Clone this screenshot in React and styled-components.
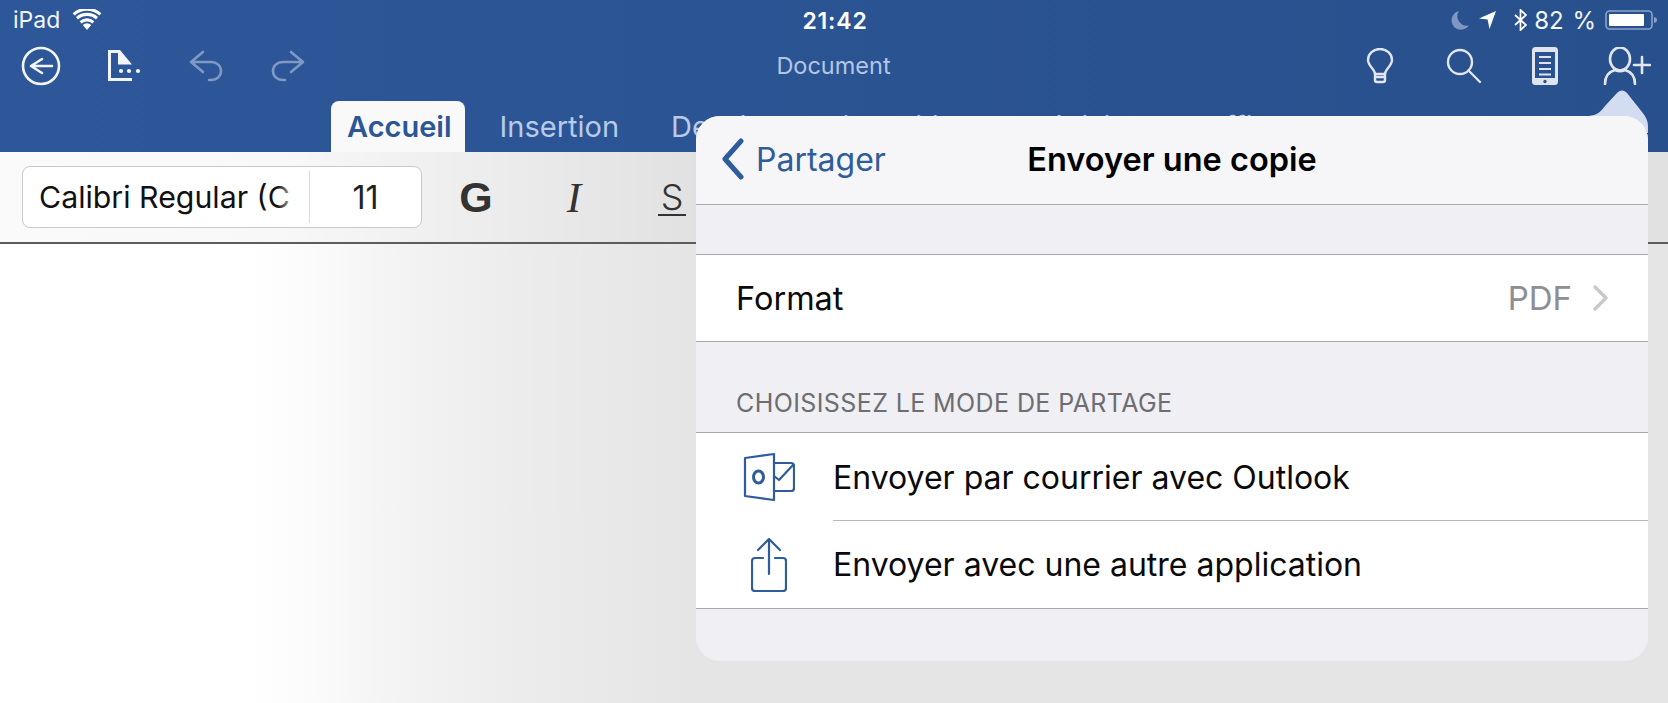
import React from "react";
import styled, { createGlobalStyle } from "styled-components";

const Global = createGlobalStyle`
  html, body { margin: 0; padding: 0; background: #e5e5e5; }
  body { font-family: Inter, "Noto Sans", sans-serif; overflow: hidden; }
  * { box-sizing: border-box; }
`;

const Page = styled.div`
  position: relative;
  width: 1668px;
  height: 703px;
  overflow: hidden;
  display: flex;
  flex-direction: column;
  background: linear-gradient(90deg, #ffffff 0, #ffffff 250px, #fbfbfb 310px, #f4f4f4 390px, #ececec 520px, #e5e5e5 690px);
`;

const Header = styled.header`
  height: 152px;
  flex: none;
  background: linear-gradient(90deg, #2d5799 0%, #28508c 100%);
  color: #fff;
  display: flex;
  flex-direction: column;
`;

const StatusBar = styled.div`
  height: 40px;
  padding: 0 11px 0 13px;
  display: grid;
  grid-template-columns: 1fr auto 1fr;
  align-items: center;
  font-size: 23px;
  color: #f2f5fa;
`;

const StatusGroup = styled.div`
  display: flex;
  align-items: center;
  gap: ${(p) => p.$gap || 0}px;
  justify-content: ${(p) => (p.$end ? "flex-end" : "flex-start")};
`;

const Clock = styled.div`
  font-weight: 600;
  font-size: 23px;
  letter-spacing: 0.8px;
  padding-top: 2px;
  color: #fff;
`;

const Battery = styled.span`
  margin-left: 7px;
  font-size: 24px;
  word-spacing: 2px;
`;

const Toolbar = styled.div`
  height: 51px;
  padding: 0 17px 0 21px;
  display: grid;
  grid-template-columns: 1fr auto 1fr;
  align-items: center;
`;

const ToolGroup = styled.div`
  display: flex;
  align-items: center;
  justify-content: ${(p) => (p.$end ? "flex-end" : "flex-start")};
`;

const DocTitle = styled.div`
  font-size: 23.5px;
  color: #b4c6e4;
  margin-right: 5px;
`;

const IconSlot = styled.span`
  display: flex;
  align-items: center;
  justify-content: center;
  flex: none;
  width: ${(p) => p.$w}px;
  margin-left: ${(p) => p.$ml || 0}px;
`;

const TabRow = styled.nav`
  flex: 1;
  display: flex;
  align-items: flex-end;
  padding: 0 0 0 331px;
  white-space: nowrap;
  overflow: hidden;
`;

const Tab = styled.div`
  height: 51px;
  display: flex;
  align-items: center;
  justify-content: center;
  font-size: 29px;
  padding: ${(p) => (p.$active ? "0 13px 0 16px" : "0")};
  margin-left: ${(p) => p.$ml || 0}px;
  border-radius: 8px 8px 0 0;
  font-weight: ${(p) => (p.$active ? 600 : 400)};
  color: ${(p) => (p.$active ? "#2b5797" : "#b7cbe9")};
  background: ${(p) => (p.$active ? "#f9f9f9" : "transparent")};
`;

const Ribbon = styled.div`
  height: 92px;
  flex: none;
  display: flex;
  align-items: center;
  padding: 0 0 0 22px;
  border-bottom: 2px solid #5c5c5c;
  background: linear-gradient(90deg, #fafafa 0, #f8f8f8 280px, #e1e1e1 700px);
`;

const FontBox = styled.div`
  width: 400px;
  height: 62px;
  display: flex;
  align-items: center;
  background: #fff;
  border: 1px solid #c9c9c9;
  border-radius: 8px;
`;

const FontName = styled.div`
  position: relative;
  width: 264px;
  margin-left: 16px;
  white-space: nowrap;
  font-size: 30.3px;
  color: #111;
  &::after {
    content: "";
    position: absolute;
    top: 0;
    right: 8px;
    bottom: 0;
    width: 18px;
    background: linear-gradient(90deg, rgba(255, 255, 255, 0), rgba(255, 255, 255, 0.8));
  }
`;

const FontDivider = styled.div`
  width: 1px;
  height: 52px;
  margin-left: 6px;
  background: #dcdcdc;
`;

const FontSize = styled.div`
  flex: 1;
  text-align: center;
  font-size: 32px;
  color: #222;
`;

const FormatBtn = styled.div`
  width: 60px;
  margin-left: ${(p) => p.$ml}px;
  text-align: center;
  color: #333;
  line-height: 1;
  font-size: ${(p) => p.$size}px;
  font-weight: ${(p) => p.$weight || 400};
  font-style: ${(p) => (p.$italic ? "italic" : "normal")};
  font-family: ${(p) => p.$font || "Inter"}, sans-serif;
`;

const Underlined = styled.span`
  display: inline-block;
  padding: 0 3px 3px;
  line-height: 27px;
  border-bottom: 2px solid #333;
`;

const Body = styled.main`
  flex: 1;
`;

const Arrow = styled.svg`
  position: absolute;
  left: 1585px;
  top: 88px;
`;

const Sheet = styled.section`
  position: absolute;
  left: 696px;
  top: 116px;
  width: 952px;
  height: 545px;
  border-radius: 24px;
  overflow: hidden;
  background: #efeff4;
  display: flex;
  flex-direction: column;
`;

const SheetNav = styled.div`
  height: 89px;
  flex: none;
  background: #f6f6f9;
  border-bottom: 1px solid #a9a9ad;
  display: grid;
  grid-template-columns: 1fr auto 1fr;
  align-items: center;
  padding-bottom: 2px;
`;

const BackLink = styled.div`
  display: flex;
  align-items: center;
  gap: 11px;
  margin-left: 25px;
  font-size: 32px;
  color: #2f5c9b;
`;

const SheetTitle = styled.h2`
  margin: 0;
  font-size: 32.5px;
  font-weight: 600;
  color: #000;
`;

const Spacer = styled.div`
  height: ${(p) => p.$h}px;
  flex: none;
`;

const Group = styled.div`
  flex: none;
  background: #fff;
  border-top: 1px solid #a9a9ad;
  border-bottom: 1px solid #a9a9ad;
`;

const FormatRow = styled.div`
  height: 86px;
  display: flex;
  align-items: center;
  justify-content: space-between;
  padding: 0 39px 0 40px;
  font-size: 32.5px;
  color: #0a0a0a;
`;

const FormatValue = styled.div`
  display: flex;
  align-items: center;
  gap: 21px;
  font-size: 33px;
  color: #8e8e93;
`;

const SectionLabel = styled.div`
  height: 90px;
  flex: none;
  padding: 0 0 14px 40px;
  display: flex;
  align-items: flex-end;
  font-size: 25px;
  color: #6d6d72;
  letter-spacing: 0.4px;
`;

const ShareRow = styled.div`
  height: ${(p) => p.$h}px;
  display: flex;
  align-items: center;
  font-size: 32px;
  color: #0a0a0a;
  position: relative;
  &::after {
    content: ${(p) => (p.$sep ? '""' : "none")};
    position: absolute;
    left: 137px;
    right: 0;
    bottom: 0;
    height: 1px;
    background: #b9b9bd;
  }
`;

const ShareIcon = styled.span`
  width: 137px;
  flex: none;
  display: flex;
  justify-content: center;
  padding-left: 8px;
`;

const Stroke = ({ w, h, vb, sw = 2.4, color = "currentColor", children }) => (
  <svg width={w} height={h} viewBox={vb || `0 0 ${w} ${h}`} fill="none" stroke={color} strokeWidth={sw} strokeLinecap="round" strokeLinejoin="round">
    {children}
  </svg>
);

export default function App() {
  return (
    <Page>
      <Global />
      <Header>
        <StatusBar>
          <StatusGroup $gap={12}>
            <span>iPad</span>
            <svg width="30" height="22" viewBox="0 0 30 22" fill="#fff">
              <path d="M15 21l-4.2-5a6.2 6.2 0 0 1 8.4 0z" />
              <path d="M7.6 12.2a11 11 0 0 1 14.8 0l-2 2.4a8 8 0 0 0-10.8 0z" />
              <path d="M4 8a16.500 16.500 0 0 1 22 0l-2 2.400a13.400 13.400 0 0 0-18 0z" />
              <path d="M.6 4.200a21.500 21.500 0 0 1 28.800 0l-2 2.400a18.500 18.500 0 0 0-24.800 0z" />
            </svg>
          </StatusGroup>
          <Clock>21:42</Clock>
          <StatusGroup $end>
            <svg width="18" height="20" viewBox="0 0 18 20" fill="#7f97c4">
              <path d="M8 1a9.500 9.500 0 0 0 10 14.500A9.500 9.500 0 1 1 8 1z" />
            </svg>
            <IconSlot $w={17} $ml={10}>
              <svg width="17" height="18" viewBox="0 0 17 18" fill="#fff"><path d="M17 0L10.500 18 8.600 8.600 0 7.400z" /></svg>
            </IconSlot>
            <IconSlot $w={13} $ml={18}>
              <svg width="13" height="22" viewBox="0 0 13 22" fill="none" stroke="#fff" strokeWidth="1.700"><path d="M1 6l11 10-5.500 5V1L12 6 1 16" /></svg>
            </IconSlot>
            <Battery>82 %</Battery>
            <IconSlot $w={52} $ml={9}>
              <svg width="52" height="20" viewBox="0 0 52 20">
                <rect x="1" y="1" width="46" height="18" rx="3.500" fill="none" stroke="#8ba3cd" strokeWidth="1.600" />
                <rect x="4" y="4" width="35" height="12" rx="1" fill="#fff" />
                <path d="M49 7c2 .4 3 1.500 3 3s-1 2.600-3 3z" fill="#8ba3cd" />
              </svg>
            </IconSlot>
          </StatusGroup>
        </StatusBar>
        <Toolbar>
          <ToolGroup>
            <IconSlot $w={40}>
              <Stroke w={40} h={40} color="#f2f5fa" sw={2.6}>
                <circle cx="20" cy="20" r="18" />
                <path d="M31 20H10M21 13l-11 7 11 7" />
              </Stroke>
            </IconSlot>
            <IconSlot $w={36} $ml={47}>
              <svg width="36" height="31" viewBox="0 0 36 31" fill="#f2f5fa">
                <path d="M0 0h12l12 14.500H10V3H3v25h21v3H0z" />
                <circle cx="13" cy="21" r="2.100" />
                <circle cx="21" cy="21" r="2.100" />
                <circle cx="30" cy="21" r="2.100" />
              </svg>
            </IconSlot>
            <IconSlot $w={34} $ml={45}>
              <Stroke w={34} h={32} color="#7f99c4" sw={2.6}>
                <path d="M14 2L2 12l12 10M2 12h20c6 0 10 4 10 9s-4 9-10 9h-2" />
              </Stroke>
            </IconSlot>
            <IconSlot $w={34} $ml={48}>
              <Stroke w={34} h={32} color="#7f99c4" sw={2.6}>
                <path d="M20 2l12 10-12 10M32 12H12C6 12 2 16 2 21s4 9 10 9h2" />
              </Stroke>
            </IconSlot>
          </ToolGroup>
          <DocTitle>Document</DocTitle>
          <ToolGroup $end>
            <IconSlot $w={28}>
              <Stroke w={28} h={36} color="#e1e6f0" sw={2.4}>
                <path d="M9 26c0-5-7-8-7-14a12 11 0 0 1 24 0c0 6-7 9-7 14z" />
                <path d="M9 26v6a2 2 0 0 0 2 2h6a2 2 0 0 0 2-2v-6M9 29h10" />
              </Stroke>
            </IconSlot>
            <IconSlot $w={36} $ml={52}>
              <Stroke w={36} h={36} color="#e1e6f0" sw={2.4}>
                <circle cx="14" cy="14" r="12" />
                <path d="M22.500 22.500L34 34" />
              </Stroke>
            </IconSlot>
            <IconSlot $w={26} $ml={50}>
              <svg width="26" height="38" viewBox="0 0 26 38">
                <rect width="26" height="38" rx="3.500" fill="#dfe4ef" />
                <rect x="3" y="5" width="20" height="26" fill="#2a5290" />
                <path d="M7 10h12M7 16h12M7 22h12M7 27.500h12" stroke="#dfe4ef" strokeWidth="2" />
                <circle cx="13" cy="34.500" r="1.700" fill="#2a5290" />
              </svg>
            </IconSlot>
            <IconSlot $w={48} $ml={45}>
              <Stroke w={48} h={38} color="#e1e6f0" sw={2.6}>
                <ellipse cx="17" cy="12" rx="10" ry="11.500" />
                <path d="M2 37c0-7 3-12 10-14c3 1.500 7 1.500 10 0c7 2 10 7 10 14" />
                <path d="M31 18h16M39 10v16" />
              </Stroke>
            </IconSlot>
          </ToolGroup>
        </Toolbar>
        <TabRow>
          <Tab $active>Accueil</Tab>
          <Tab $ml={35}>Insertion</Tab>
          <Tab $ml={52}>Dessiner</Tab>
          <Tab $ml={30}>Disposition</Tab>
          <Tab $ml={57}>Révision</Tab>
          <Tab $ml={60}>Affichage</Tab>
        </TabRow>
      </Header>
      <Ribbon>
        <FontBox>
          <FontName>Calibri Regular (C</FontName>
          <FontDivider />
          <FontSize>11</FontSize>
        </FontBox>
        <FormatBtn $ml={24} $size={43} $weight={700} $font='"Liberation Sans"'>G</FormatBtn>
        <FormatBtn $ml={38} $size={43} $italic $font='"Liberation Serif"'>I</FormatBtn>
        <FormatBtn $ml={38} $size={36} $weight={300}><Underlined>S</Underlined></FormatBtn>
      </Ribbon>
      <Body />
      <Arrow width="64" height="45" viewBox="0 0 64 45">
        <path d="M0 28C10 28 14 26 20 18L32 5c3-3.500 7-3.500 10 0L57 24c4 5 6 9 6 14v7H0z" fill="#d2ddf1" />
      </Arrow>
      <Sheet>
        <SheetNav>
          <BackLink>
            <Stroke w={24} h={42} color="#2f5c9b" sw={5}>
              <path d="M20 3L4 21l16 18" />
            </Stroke>
            Partager
          </BackLink>
          <SheetTitle>Envoyer une copie</SheetTitle>
          <span />
        </SheetNav>
        <Spacer $h={49} />
        <Group>
          <FormatRow>
            <span>Format</span>
            <FormatValue>
              PDF
              <Stroke w={16} h={26} color="#c7c7cc" sw={3.2}>
                <path d="M2 2l11 11L2 24" />
              </Stroke>
            </FormatValue>
          </FormatRow>
        </Group>
        <SectionLabel>CHOISISSEZ LE MODE DE PARTAGE</SectionLabel>
        <Group>
          <ShareRow $h={88} $sep>
            <ShareIcon>
              <Stroke w={52} h={52} color="#2f5c9b" sw={2.2}>
                <path d="M2 7l29-4v46L2 45z" />
                <path d="M31 12h17a3 3 0 0 1 3 3v22a3 3 0 0 1-3 3H31" />
                <path d="M31 25l5 4L50 14" />
                <ellipse cx="15.500" cy="26" rx="5" ry="6" strokeWidth="3" />
              </Stroke>
            </ShareIcon>
            Envoyer par courrier avec Outlook
          </ShareRow>
          <ShareRow $h={87}>
            <ShareIcon>
              <Stroke w={36} h={54} color="#2f5c9b" sw={2.2}>
                <path d="M18 36V2M7 12L18 1l11 11" />
                <path d="M12 20H4a3 3 0 0 0-3 3v27a3 3 0 0 0 3 3h28a3 3 0 0 0 3-3V23a3 3 0 0 0-3-3h-8" />
              </Stroke>
            </ShareIcon>
            Envoyer avec une autre application
          </ShareRow>
        </Group>
      </Sheet>
    </Page>
  );
}
